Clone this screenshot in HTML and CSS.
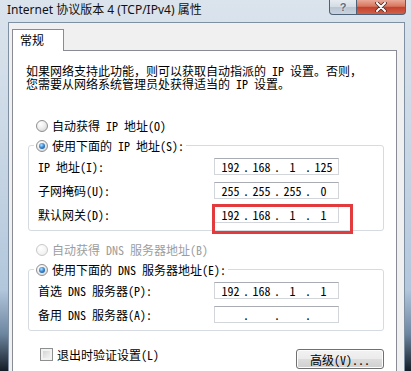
FILE: index.html
```html
<!DOCTYPE html>
<html lang="zh-CN">
<head>
    <meta charset="UTF-8">
    <meta name="viewport" content="width=device-width, initial-scale=1.0">
    <title>Internet 协议版本 4 (TCP/IPv4) 属性</title>
    <link rel="stylesheet" href="styles.css">
</head>
<body>
    <div class="window">
        <div class="titlebar">
            <span class="title">Internet 协议版本 4 (TCP/IPv4) 属性</span>
            <div class="caption-buttons">
                <span class="btn-help">?</span>
                <span class="btn-close">
                    <svg width="12" height="10" viewBox="0 0 12 10">
                        <path d="M2 1 L10 9 M10 1 L2 9" stroke="#4a2a26" stroke-width="3.6" stroke-linecap="round"/>
                        <path d="M2 1 L10 9 M10 1 L2 9" stroke="#ffffff" stroke-width="2" stroke-linecap="round"/>
                    </svg>
                </span>
            </div>
        </div>

        <div class="client">
            <div class="tabs">
                <div class="tab active">常规</div>
            </div>

            <div class="tab-panel">
                <p class="intro">如果网络支持此功能，则可以获取自动指派的 IP 设置。否则，</p>
                <p class="intro">您需要从网络系统管理员处获得适当的 IP 设置。</p>

                <label class="radio-row option"><span class="radio"></span>自动获得 IP 地址(O)</label>
                <fieldset class="group">
                    <legend><label class="radio-row"><span class="radio checked"></span>使用下面的 IP 地址(S):</label></legend>
                    <div class="group-body">
                        <div class="field-row">
                            <span class="field-label">IP 地址(I):</span>
                            <div class="ip-box"><span>192</span><i>.</i><span>168</span><i>.</i><span>1</span><i>.</i><span>125</span></div>
                        </div>
                        <div class="field-row">
                            <span class="field-label">子网掩码(U):</span>
                            <div class="ip-box"><span>255</span><i>.</i><span>255</span><i>.</i><span>255</span><i>.</i><span>0</span></div>
                        </div>
                        <div class="field-row">
                            <span class="field-label">默认网关(D):</span>
                            <div class="ip-wrap">
                                <div class="ip-box"><span>192</span><i>.</i><span>168</span><i>.</i><span>1</span><i>.</i><span>1</span></div>
                                <div class="highlight"></div>
                            </div>
                        </div>
                    </div>
                </fieldset>

                <label class="radio-row option disabled dns-auto"><span class="radio"></span>自动获得 DNS 服务器地址(B)</label>
                <fieldset class="group">
                    <legend><label class="radio-row"><span class="radio checked"></span>使用下面的 DNS 服务器地址(E):</label></legend>
                    <div class="group-body">
                        <div class="field-row">
                            <span class="field-label">首选 DNS 服务器(P):</span>
                            <div class="ip-box"><span>192</span><i>.</i><span>168</span><i>.</i><span>1</span><i>.</i><span>1</span></div>
                        </div>
                        <div class="field-row">
                            <span class="field-label">备用 DNS 服务器(A):</span>
                            <div class="ip-box"><span></span><i>.</i><span></span><i>.</i><span></span><i>.</i><span></span></div>
                        </div>
                    </div>
                </fieldset>

                <div class="bottom-row">
                    <label class="check-row"><span class="checkbox"></span>退出时验证设置(L)</label>
                    <button class="btn">高级(V)...</button>
                </div>
            </div>
        </div>
    </div>
</body>
</html>
```

FILE: styles.css
```css
* {
    box-sizing: border-box;
}

body {
    margin: 0;
    width: 411px;
    height: 371px;
    overflow: hidden;
    font-family: "Noto Sans Mono CJK SC", "Noto Sans CJK SC", sans-serif;
    font-size: 12px;
    color: #000;
}

.window {
    height: 371px;
    display: flex;
    flex-direction: column;
    background: linear-gradient(to bottom, #dbe4ed 0%, #c9d7e5 40%, #b2c7dc 78%, #6d86a0 90%, #141c26 100%);
}

/* title bar */
.titlebar {
    height: 22px;
    display: flex;
    align-items: flex-start;
    flex: none;
}

.title {
    padding-left: 7px;
    line-height: 20px;
    font-family: "Noto Sans", "Noto Sans CJK SC", sans-serif;
    font-size: 12px;
    color: #111;
}

.caption-buttons {
    margin-left: auto;
    margin-right: 5px;
    display: flex;
}

.btn-help,
.btn-close {
    height: 15px;
    display: flex;
    align-items: center;
    justify-content: center;
    border: 1px solid #4f6176;
    border-top: none;
}

.btn-help {
    width: 28px;
    border-radius: 0 0 0 4px;
    background: linear-gradient(to bottom, #e6ebf1 0%, #d3dbe4 50%, #b9c5d2 51%, #c9d3de 100%);
    font-family: "Liberation Sans", sans-serif;
    font-weight: bold;
    font-size: 11px;
    color: #5d6c7e;
    text-shadow: 0 0 2px #fff;
}

.btn-close {
    width: 49px;
    border-left: none;
    border-radius: 0 0 4px 0;
    background: linear-gradient(to bottom, #e9a898 0%, #d9765f 45%, #c4422c 52%, #d0604a 100%);
}

/* client area */
.client {
    flex: 1;
    margin: 0 6px 0 8px;
    background: #f0f0f0;
    border: 1px solid #7f90a3;
    border-bottom: none;
    padding: 6px 7px 0 3px;
    display: flex;
    flex-direction: column;
}

.tabs {
    display: flex;
    flex: none;
}

.tab {
    width: 52px;
    height: 22px;
    padding: 3px 0 0 7px;
    line-height: 13px;
    font-family: "Noto Sans CJK SC", sans-serif;
    background: #fff;
    border: 1px solid #898c95;
    border-bottom: none;
    position: relative;
    z-index: 1;
}

.tab-panel {
    flex: 1;
    margin-top: -1px;
    background: #fff;
    border: 1px solid #898c95;
    border-bottom: none;
    padding: 13px 12px 0 13px;
}

.intro {
    margin: 0;
    height: 13px;
    line-height: 13px;
    white-space: nowrap;
}

/* radio buttons */
.radio-row {
    display: flex;
    align-items: center;
    height: 13px;
    line-height: 13px;
    white-space: nowrap;
}

.option {
    margin: 29px 0 0 10px;
}

.dns-auto {
    margin-top: 12px;
}

.disabled {
    color: #9d9d9d;
}

.radio {
    width: 12px;
    height: 12px;
    margin-right: 4px;
    flex: none;
    border: 1px solid #8d8f91;
    border-radius: 50%;
    background: radial-gradient(circle at 35% 30%, #ffffff 0%, #eeeeee 45%, #cdcdcd 100%);
    position: relative;
}

.radio.checked::after {
    content: '';
    position: absolute;
    left: 2px;
    top: 2px;
    width: 6px;
    height: 6px;
    border-radius: 50%;
    background: radial-gradient(circle at 40% 35%, #b7e3ff 0%, #3a8ad8 45%, #0d3f7c 100%);
}

.disabled .radio {
    border-color: #c9c9c9;
    background: radial-gradient(circle at 35% 30%, #ffffff 0%, #f4f4f4 60%, #e4e4e4 100%);
}

/* group boxes */
.group {
    margin: 7px 0 0 2px;
    padding: 0;
    border: 1px solid #d5dbe0;
    border-radius: 3px;
    min-width: 0;
}

.group legend {
    margin-left: 5px;
    padding: 0 2px;
    background: #fff;
}

.group-body {
    padding: 6px 0 7px 9px;
    display: flex;
    flex-direction: column;
    gap: 7px;
}

.field-row {
    display: flex;
    align-items: center;
    height: 17px;
}

.field-label {
    width: 176px;
    white-space: nowrap;
}

/* ip address control */
.ip-box {
    width: 125px;
    height: 17px;
    padding-left: 3px;
    display: flex;
    align-items: center;
    background: #fff;
    border: 1px solid #d2d6db;
    border-top-color: #a9acb2;
    line-height: 15px;
}

.ip-box span {
    width: 25px;
    text-align: center;
}

.ip-box i {
    width: 6px;
    font-style: normal;
    text-align: center;
}

.ip-wrap {
    position: relative;
}

.highlight {
    position: absolute;
    left: -2px;
    top: -2px;
    width: 141px;
    height: 30px;
    border: 3px solid #e23a3d;
}

/* bottom row */
.bottom-row {
    margin-top: 17px;
    display: flex;
    justify-content: space-between;
    align-items: flex-start;
}

.check-row {
    margin-left: 14px;
    display: flex;
    align-items: center;
    height: 13px;
    line-height: 13px;
}

.checkbox {
    width: 13px;
    height: 13px;
    margin-right: 4px;
    border: 1px solid #8e8f8f;
    background: linear-gradient(135deg, #cbcbcb 0%, #e9e9e9 60%, #f7f7f7 100%);
    box-shadow: inset 0 0 0 2px #f2f2f2;
}

.btn {
    margin-top: 1px;
    width: 88px;
    height: 20px;
    padding: 0;
    font-family: "Noto Sans Mono CJK SC", "Noto Sans CJK SC", sans-serif;
    font-size: 12px;
    color: #000;
    border: 1px solid #707070;
    border-radius: 3px;
    background: linear-gradient(to bottom, #f2f2f2 0%, #ebebeb 50%, #dddddd 51%, #cfcfcf 100%);
    box-shadow: inset 0 0 0 1px #fcfcfc;
}
```
